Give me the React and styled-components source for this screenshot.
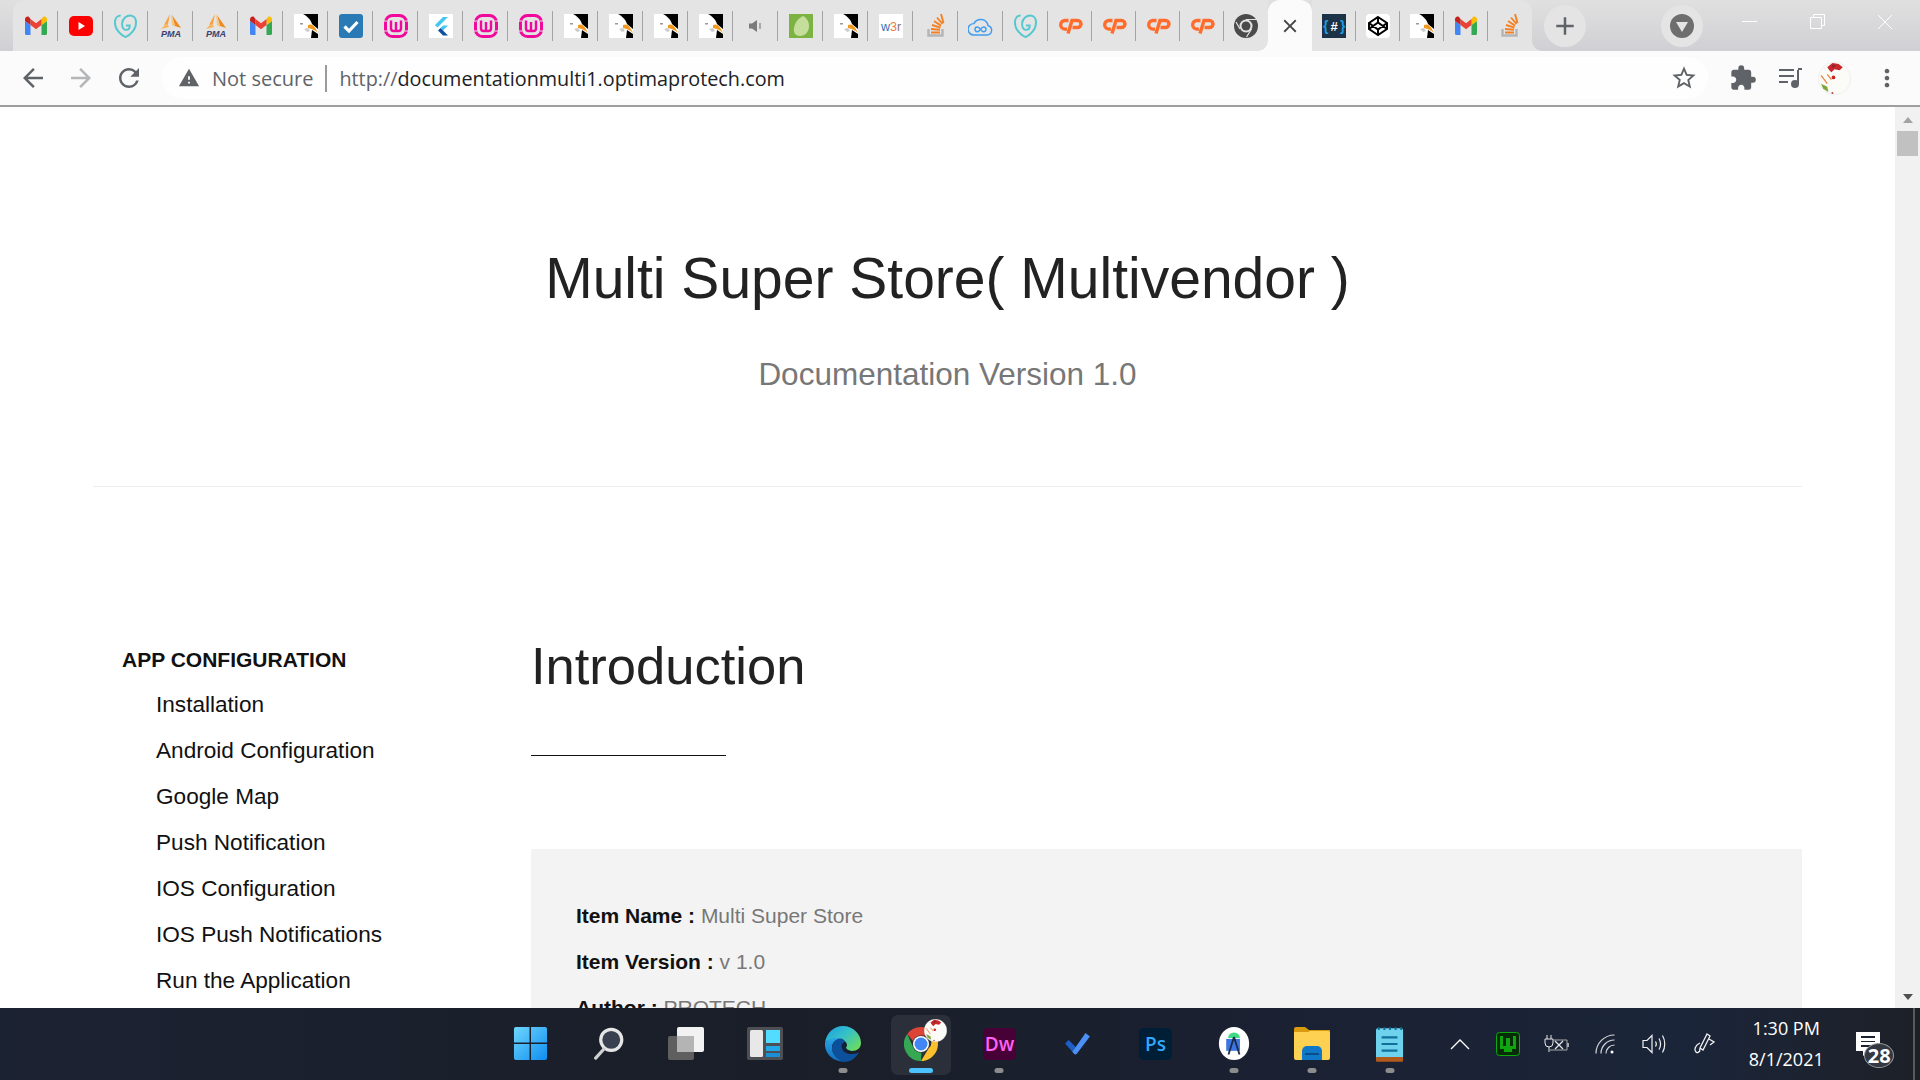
import React from 'react';
import styled, { createGlobalStyle } from 'styled-components';
import {
  MdArrowBack, MdArrowForward, MdRefresh, MdStarBorder, MdExtension, MdMoreVert, MdWarning, MdAdd, MdClose,
} from 'react-icons/md';

const GlobalStyle = createGlobalStyle`
  html, body { margin: 0; padding: 0; height: 100%; overflow: hidden; background: #fff; }
  * { box-sizing: border-box; }
  body { font-family: "Liberation Sans", Arial, sans-serif; }
`;

/* favicons in the tab strip */
const Gmail = () => (
  <svg width="24" height="19" viewBox="0 0 24 19">
    <path fill="#4285F4" d="M1 4v13.400A1.600 1.600 0 0 0 2.600 19H6.500V9L1 5z" />
    <path fill="#34A853" d="M17.500 19h3.900a1.600 1.600 0 0 0 1.600-1.600V5l-5.500 4z" />
    <path fill="#FBBC04" d="M17.500 3v6L23 5V3.500c0-2.300-2.300-3.800-4-2.500z" />
    <path fill="#EA4335" d="M6.500 9V3L12 7.200 17.500 3v6L12 13.200z" />
    <path fill="#C5221F" d="M1 3.500V5l5.500 4V3L5 1C3.300-.300 1 1.200 1 3.500z" />
  </svg>
);
const Youtube = () => (
  <svg width="24" height="24" viewBox="0 0 24 24">
    <rect x="0" y="2" width="24" height="20" rx="5" fill="#f00" />
    <path fill="#fff" d="M9.500 8l6.500 4-6.500 4z" />
  </svg>
);
const Swirl = () => (
  <svg width="23" height="24" viewBox="0 0 24 25" fill="none" stroke="#55c8cf" strokeWidth="2">
    <path d="M7 1.500C3 1.500 1 5 1 9c0 7 6 13 11 15 5-2 11-8 11-15 0-4-2-7.500-6-7.500-4 0-8 3-8.500 8-.4 3.500 1 7 4 7 2.500 0 4-2 4-4.500h-4" />
  </svg>
);
const Pma = () => (
  <svg width="24" height="24" viewBox="0 0 24 24">
    <path fill="#f6a13a" d="M11 0L5 11l4-1z" />
    <path fill="#fbc27a" d="M12 0l1 11 3 2z" />
    <path fill="#ee8a1e" d="M13 1l9 13-6-2z" />
    <path fill="#f8b45c" d="M8 9l-6 6 8-2z" />
    <text x="12" y="23" textAnchor="middle" fontFamily="Liberation Sans" fontSize="9" fontWeight="700" fontStyle="italic" fill="#3c3f6e">PMA</text>
  </svg>
);
const Gull = () => (
  <svg width="24" height="24" viewBox="0 0 24 24">
    <rect width="24" height="24" fill="#fff" />
    <path fill="#000" d="M9 0C13 2 17 6 18 10l6 5V0z" />
    <path fill="#000" d="M17 24l1-8 6 4v4z" />
    <path fill="#f29a1d" d="M14 11c4-2 7 1 10 8-3-3-6-4-10-5z" />
    <path fill="#999" d="M6 9h3v1.500H6z" />
    <path fill="#ccc" d="M10 15l4-1 2 3-3 1z" />
  </svg>
);
const BlueCheck = () => (
  <svg width="24" height="24" viewBox="0 0 24 24">
    <rect width="24" height="24" rx="3" fill="#2a7ab5" />
    <path d="M5.500 12.500l4.500 4.500 8.500-9" fill="none" stroke="#fff" strokeWidth="3.200" />
  </svg>
);
const Wamp = () => (
  <svg width="24" height="24" viewBox="0 0 24 24" fill="none" stroke="#f0099a">
    <rect x="1.500" y="1.500" width="21" height="21" rx="7" strokeWidth="3" />
    <path d="M7 6.500v8a2.500 2.500 0 0 0 2.500 2.500h5a2.500 2.500 0 0 0 2.500-2.500v-8M12 8v9" strokeWidth="2.400" />
    <path d="M0 7h3M21 7h3M0 17h3M21 17h3" stroke="#e4e4e4" strokeWidth="1" />
  </svg>
);
const Flutter = () => (
  <svg width="24" height="24" viewBox="0 0 24 24">
    <rect width="24" height="24" fill="#fff" />
    <path fill="#45c6f3" d="M14 3h5L8.500 13.500 6 11z" />
    <path fill="#45c6f3" d="M14 11.500h5L14 16.500 11.500 14z" />
    <path fill="#0f4f9e" d="M11.500 14L14 16.500l5 5h-5L9 16.500z" />
  </svg>
);
const Speaker = () => (
  <svg width="16" height="16" viewBox="0 0 16 16">
    <path fill="#7b7b7b" d="M1 5.500h3L9 2v12l-5-3.500H1z" />
    <rect x="11" y="5" width="2" height="6" fill="#a9a9a9" />
  </svg>
);
const Evernote = () => (
  <svg width="24" height="24" viewBox="0 0 24 24">
    <rect width="24" height="24" fill="#7cb342" />
    <path fill="#c5de9c" d="M14 2c4 2 6 6 6 10 0 6-4 10-9 10-4 0-7-3-6-8 1-6 5-10 9-12z" />
  </svg>
);
const W3r = () => (
  <svg width="24" height="24" viewBox="0 0 24 24">
    <rect width="24" height="24" fill="#fff" />
    <text x="12" y="17" textAnchor="middle" fontFamily="Liberation Sans" fontSize="12.500">
      <tspan fill="#3b6fb5">w</tspan><tspan fill="#f0783c">3</tspan><tspan fill="#777">r</tspan>
    </text>
  </svg>
);
const Stack = () => (
  <svg width="18" height="23" viewBox="0 0 18 23" fill="none">
    <path d="M1.500 15v6.500h14V15" stroke="#b5b5b5" strokeWidth="2.400" />
    <path d="M4 18.500h9M4 15l9 .8M5 11l8.500 2.600M7 7l7 4.600M10 3.500l5.500 6.500M14 0l2.500 9" stroke="#f48024" strokeWidth="1.900" />
  </svg>
);
const Cloud = () => (
  <svg width="25" height="20" viewBox="0 0 26 21" fill="none" stroke="#3f9cf0" strokeWidth="1.500">
    <path d="M6 20h14a5 5 0 0 0 1-9.800A8 8 0 0 0 6 8a6 6 0 0 0 0 12z" />
    <path d="M13 14c-1-1.500-2-2.500-3.300-2.500a2.500 2.500 0 0 0 0 5c1.300 0 2.300-1 3.300-2.500s2-2.500 3.300-2.500a2.500 2.500 0 0 1 0 5c-1.300 0-2.300-1-3.300-2.500z" />
  </svg>
);
const CPanel = () => (
  <svg width="25" height="17" viewBox="0 0 25 17" fill="none" stroke="#ff6c2c" strokeWidth="3.400">
    <path d="M10.500 3.500H7a4.300 4.300 0 0 0 0 8.600h2" />
    <path d="M10 16.500l4-13h5.500a3.200 3.200 0 0 1 0 7H14.500" />
  </svg>
);
const GrayChrome = () => (
  <svg width="24" height="24" viewBox="0 0 24 24">
    <circle cx="12" cy="12" r="12" fill="#4b4b4b" />
    <circle cx="12" cy="12" r="6.500" fill="#e4e4e4" />
    <circle cx="12" cy="12" r="4.500" fill="#4b4b4b" />
    <path d="M12 5.500h11M6 15l-4-7M17.500 15l-5 8" stroke="#e4e4e4" strokeWidth="1.200" />
  </svg>
);
const HashTag = () => (
  <svg width="24" height="24" viewBox="0 0 24 24">
    <rect width="24" height="24" fill="#1c3247" />
    <text x="12" y="17" textAnchor="middle" fontFamily="Liberation Sans" fontSize="13" fontWeight="700" fill="#fff">#</text>
    <text x="1" y="17" fontFamily="Liberation Sans" fontSize="14" fontWeight="700" fill="#1f9be0">{'{'}</text>
    <text x="18" y="17" fontFamily="Liberation Sans" fontSize="14" fontWeight="700" fill="#1f9be0">{'}'}</text>
  </svg>
);
const Codepen = () => (
  <svg width="24" height="24" viewBox="0 0 24 24">
    <rect width="24" height="24" rx="4" fill="#fff" />
    <path d="M12 3l9 6v6l-9 6-9-6V9zM12 3v5.500M12 21v-5.500M3 9l9 6.500L21 9M3 15l9-6.500 9 6.500" fill="none" stroke="#000" strokeWidth="2" />
  </svg>
);

const tabIcons = [
  Gmail, Youtube, Swirl, Pma, Pma, Gmail, Gull, BlueCheck, Wamp, Flutter, Wamp, Wamp, Gull, Gull, Gull, Gull,
  Speaker, Evernote, Gull, W3r, Stack, Cloud, Swirl, CPanel, CPanel, CPanel, CPanel, GrayChrome, null,
  HashTag, Codepen, Gull, Gmail, Stack,
];

const Screen = styled.div`
  width: 1920px;
  height: 1080px;
  display: flex;
  flex-direction: column;
  overflow: hidden;
`;

const TabStrip = styled.div`
  height: 51px;
  flex: none;
  display: flex;
  align-items: stretch;
  padding-left: 13px;
  background: linear-gradient(#e0e0e0, #d0d0d4);
`;

const Tab = styled.div`
  width: ${(p) => (p.$narrow ? 44 : 45)}px;
  flex: none;
  display: flex;
  align-items: center;
  justify-content: center;
  position: relative;
  background: ${(p) => (p.$active ? '#fbfbfb' : '#e4e4e4')};
  border-radius: ${(p) => (p.$first || p.$active ? '12px 12px 0 0' : '0')};
  border-top-right-radius: ${(p) => (p.$last || p.$active ? '12px' : '0')};
  color: #444;

  &::after {
    content: '';
    display: ${(p) => (p.$noSep ? 'none' : 'block')};
    position: absolute;
    right: 0;
    top: 11px;
    height: 30px;
    width: 1px;
    background: #a3a3a3;
  }
`;

const Flare = styled.div`
  position: absolute;
  bottom: 0;
  width: 10px;
  height: 10px;
  ${(p) => (p.$side === 'left' ? 'left: -10px;' : 'right: -10px;')}
  background: radial-gradient(
    circle 10px at ${(p) => (p.$side === 'left' ? '0 0' : '100% 0')},
    transparent 9.500px,
    ${(p) => p.$color} 10px
  );
`;

const NewTab = styled.div`
  width: 42px;
  height: 42px;
  margin: 5px 0 0 12px;
  flex: none;
  border-radius: 50%;
  background: #e4e4e4;
  color: #5f6368;
  display: flex;
  align-items: center;
  justify-content: center;
  font-size: 30px;
`;

const ProfileDot = styled.div`
  width: 42px;
  height: 42px;
  margin: 5px 0 0 75px;
  flex: none;
  border-radius: 50%;
  background: #e4e4e4;
  display: flex;
  align-items: center;
  justify-content: center;
`;

const WindowButtons = styled.div`
  margin-left: 12px;
  display: flex;
  align-items: center;
  height: 43px;
  color: #fff;
`;

const WindowButton = styled.div`
  width: 68px;
  display: flex;
  justify-content: center;
`;

const Toolbar = styled.div`
  height: 56px;
  flex: none;
  display: flex;
  align-items: center;
  padding-right: 12px;
  background: #fbfbfb;
  border-bottom: 2px solid #9e9e9e;
  color: #5f6368;
  font-family: "Open Sans", "Noto Sans", sans-serif;
`;

const NavButton = styled.div`
  width: 48px;
  display: flex;
  justify-content: center;
  font-size: 30px;
  color: ${(p) => (p.$dim ? '#b4b6b9' : '#5f6368')};
`;

const NavGroup = styled.div`
  display: flex;
  padding-left: 9px;
`;

const Omnibox = styled.div`
  flex: 1;
  height: 42px;
  margin-left: 9px;
  padding: 0 9px 0 16px;
  border-radius: 21px;
  background: #fefefe;
  display: flex;
  align-items: center;
`;

const SecurityChip = styled.div`
  display: flex;
  align-items: center;
  gap: 12px;
  font-size: 20px;
  color: #5f6368;
`;

const Divider = styled.div`
  width: 2px;
  height: 27px;
  background: #9a9a9a;
  margin: 0 12px 0 12px;
`;

const UrlText = styled.div`
  font-size: 19.800px;
  color: #202124;
  span { color: #5f6368; }
`;

const ToolIcon = styled.div`
  width: ${(p) => p.$w}px;
  flex: none;
  display: flex;
  justify-content: center;
  font-size: 28px;
  color: #5f6368;
`;

const StarSlot = styled(ToolIcon)`
  margin-left: auto;
`;

const Page = styled.div`
  flex: 1;
  min-height: 0;
  display: flex;
  overflow: hidden;
  background: #fff;
`;

const PageBody = styled.div`
  width: 1895px;
  flex: none;
  padding: 0 93px;
  color: #222;
`;

const Header = styled.header`
  height: 380px;
  border-bottom: 1px solid #eee;
  text-align: center;
  padding-top: 139px;
`;

const Title = styled.h1`
  margin: 0;
  font-size: 57px;
  line-height: 64px;
  font-weight: 400;
  color: #222;
`;

const Subtitle = styled.p`
  margin: 44px 0 0;
  font-size: 31.500px;
  line-height: 40px;
  color: #777;
`;

const Columns = styled.div`
  display: flex;
  padding-top: 150px;
`;

const Sidebar = styled.nav`
  width: 438px;
  flex: none;
  padding-left: 29px;
`;

const SideHeading = styled.div`
  font-size: 21px;
  line-height: 45px;
  font-weight: 700;
  color: #111;
`;

const SideList = styled.ul`
  list-style: none;
  margin: 0;
  padding: 0 0 0 34px;
`;

const SideItem = styled.li`
  font-size: 22.600px;
  line-height: 46px;
  color: #111;
`;

const Content = styled.main`
  flex: 1;
`;

const SectionTitle = styled.h2`
  margin: -3px 0 0;
  font-size: 52.500px;
  line-height: 64px;
  font-weight: 400;
  color: #222;
`;

const Rule = styled.div`
  width: 195px;
  height: 1px;
  background: #111;
  margin-top: 57px;
`;

const InfoBox = styled.div`
  margin-top: 93px;
  background: #f3f3f3;
  padding: 44px 45px;
  height: 400px;
`;

const InfoRow = styled.div`
  font-size: 21px;
  line-height: 46px;
  color: #777;
  b { color: #111; }
`;

const Scrollbar = styled.div`
  width: 25px;
  flex: none;
  background: #f1f1f1;
  display: flex;
  flex-direction: column;
  align-items: center;
`;

const ScrollThumb = styled.div`
  width: 21px;
  height: 25px;
  margin-top: 8px;
  background: #c1c1c1;
`;

const ScrollArrow = styled.div`
  width: 0;
  height: 0;
  border-left: 5px solid transparent;
  border-right: 5px solid transparent;
  ${(p) => (p.$down ? 'border-top: 6px solid #505050; margin-top: auto; margin-bottom: 8px;' : 'border-bottom: 6px solid #a3a3a3; margin-top: 10px;')}
`;

const Taskbar = styled.footer`
  height: 72px;
  flex: none;
  display: flex;
  align-items: stretch;
  padding-left: 491px;
  background: linear-gradient(90deg, #1b2232, #1a1e28 40%, #1a2030 62%, #1b2539 88%, #1d2027);
  color: #fff;
  font-family: "Open Sans", "Noto Sans", sans-serif;
  position: relative;

  &::after {
    content: '';
    position: absolute;
    right: 5px;
    top: 0;
    bottom: 0;
    width: 2px;
    background: #5a5a5a;
  }
`;

const TaskSlot = styled.div`
  width: 78.200px;
  flex: none;
  display: flex;
  align-items: center;
  justify-content: center;
  position: relative;
  padding-bottom: 1px;
`;

const ActiveBack = styled.div`
  position: absolute;
  left: 9px;
  right: 9px;
  top: 7px;
  bottom: 5px;
  border-radius: 7px;
  background: #2a2f3a;
`;

const RunDot = styled.div`
  position: absolute;
  left: 50%;
  bottom: 7px;
  height: 5px;
  border-radius: 3px;
  transform: translateX(-50%);
  width: ${(p) => (p.$active ? 24 : 9)}px;
  background: ${(p) => (p.$active ? '#4cc2ff' : '#8c8c8c')};
`;

const TaskIcon = styled.div`
  position: relative;
  display: flex;
`;

const ChromeBadge = styled.div`
  position: absolute;
  right: -9px;
  top: -8px;
  display: flex;
`;

const Tray = styled.div`
  padding-left: 7px;
  display: flex;
  align-items: center;
  padding-bottom: 1px;
`;

const TraySlot = styled.div`
  width: ${(p) => p.$w || 48}px;
  flex: none;
  display: flex;
  justify-content: center;
`;

const Clock = styled.div`
  width: 112px;
  flex: none;
  text-align: center;
  font-size: 18px;
  line-height: 31px;
  color: #fff;
`;

const Bubble = styled.div`
  position: relative;
  align-self: flex-start;
  width: 24px;
  height: 19px;
  margin: 24px 0 0 14px;
  background: #fff;
  display: flex;
  flex-direction: column;
  gap: 3px;
  padding: 4px 5px;

  &::after {
    content: '';
    position: absolute;
    left: 7px;
    top: 19px;
    border-top: 5px solid #fff;
    border-right: 6px solid transparent;
  }

  i {
    display: block;
    height: 2px;
    background: #1a2231;
  }
`;

const Badge = styled.div`
  position: absolute;
  left: 8px;
  top: 11px;
  width: 30px;
  height: 25px;
  border-radius: 50%;
  background: #333842;
  border: 1px solid #999;
  color: #fff;
  font-size: 20px;
  font-weight: 700;
  display: flex;
  align-items: center;
  justify-content: center;
  z-index: 1;
`;

const WinLogo = () => (
  <svg width="35" height="35" viewBox="0 0 36 36">
    <defs>
      <linearGradient id="win" x1="0" y1="0" x2="1" y2="1">
        <stop offset="0" stopColor="#6fd6fd" />
        <stop offset="1" stopColor="#0f8ef0" />
      </linearGradient>
    </defs>
    <path fill="url(#win)" d="M1 3a2 2 0 0 1 2-2h14v16H1zM18.500 1H33a2 2 0 0 1 2 2v14H18.500zM1 18.500h16V35H3a2 2 0 0 1-2-2zM18.500 18.500H35V33a2 2 0 0 1-2 2H18.500z" />
  </svg>
);
const SearchGlass = () => (
  <svg width="33" height="33" viewBox="0 0 36 36" fill="none">
    <circle cx="21" cy="14" r="11.500" fill="#394050" stroke="#e6e6e6" strokeWidth="3.500" />
    <path d="M13 24L4 34" stroke="#d0d0d0" strokeWidth="3.500" strokeLinecap="round" />
  </svg>
);
const TaskView = () => (
  <svg width="36" height="33" viewBox="0 0 36 33">
    <rect x="0" y="9" width="26" height="24" rx="2" fill="#5f5f5f" />
    <rect x="9" y="0" width="27" height="25" rx="2" fill="#f2f2f2" />
    <rect x="9" y="9" width="17" height="16" fill="#b4b4b4" />
  </svg>
);
const Widgets = () => (
  <svg width="36" height="33" viewBox="0 0 36 33">
    <rect width="36" height="33" rx="2" fill="#4d4f55" />
    <rect x="3" y="3" width="13" height="27" rx="1.500" fill="#e8e8e8" />
    <rect x="19" y="3" width="14" height="13" fill="#52dcff" />
    <rect x="19" y="19" width="14" height="5" fill="#21a7e6" />
    <rect x="19" y="26" width="14" height="4" fill="#1b8fd6" />
  </svg>
);
const Edge = () => (
  <svg width="36" height="36" viewBox="0 0 36 36">
    <defs>
      <linearGradient id="edgeA" x1="0" y1="0" x2="1" y2=".8">
        <stop offset="0" stopColor="#1b9de2" />
        <stop offset=".5" stopColor="#35c1c8" />
        <stop offset="1" stopColor="#6bdc5c" />
      </linearGradient>
      <linearGradient id="edgeB" x1="0" y1="0" x2="0" y2="1">
        <stop offset="0" stopColor="#2aa4e8" />
        <stop offset="1" stopColor="#0f6cbd" />
      </linearGradient>
    </defs>
    <path fill="url(#edgeA)" d="M0 17C1 7 9 0 18 0c10 0 18 8 18 17 0 5-4 8-9 8-3 0-6-1-6-3 0-1 1-1.500 1-3 0-3-4-6-9-6-6 0-11 1-13 4z" />
    <path fill="url(#edgeB)" d="M0 17c2-3 7-5 12-5 1 0 2 .200 3 .600-4 1-8 4-8 9 0 6 5 12 12 14C8 36-1 27 0 17z" />
    <path fill="#0c4f9a" d="M7 22c0-5 4-9 8-9.500 3 0 5 2 5 3.500-3 1-4 3-3 6 1 4 5 6 10 6 3 0 6-1 7-2-3 6-8 10-15 10C12 34 7 28 7 22z" />
    <path fill="#10233f" d="M17 21c.500-2 2-4 3-5 1 2 0 3 1 6 1 2 4 3 6 3-4 1-9 0-10-4z" />
  </svg>
);
const Chrome = () => (
  <svg width="34" height="34" viewBox="0 0 34 34">
    <path fill="#db4437" d="M17 0a17 17 0 0 1 14.700 8.500H17a8.500 8.500 0 0 0-8 5.500L3.200 7A17 17 0 0 1 17 0z" />
    <path fill="#fbc02d" d="M31.700 8.500A17 17 0 0 1 17 34l7.500-12.500a8.500 8.500 0 0 0 0-13z" />
    <path fill="#34a853" d="M17 34A17 17 0 0 1 3.200 7L9.500 21a8.500 8.500 0 0 0 8 4.500z" />
    <circle cx="17" cy="17" r="8" fill="#fff" />
    <circle cx="17" cy="17" r="6.500" fill="#4285f4" />
  </svg>
);
const Avatar = ({ size }) => (
  <svg width={size} height={size} viewBox="0 0 32 32">
    <circle cx="16" cy="16" r="15.700" fill="#fbfbf8" stroke="#e4e4e4" strokeWidth=".5" />
    <path fill="#c9252c" d="M9 5l5-4 6 1 4 3-3 3-5-1-3 3-2-2z" />
    <path fill="#7d2a2a" d="M13 3h4l-2 3z" />
    <circle cx="15" cy="15" r="1.800" fill="#c9252c" />
    <path stroke="#e9813f" strokeWidth="1.200" d="M3 13l6 8M9 12l4 5" />
    <path fill="#7fa63a" d="M3 21l6 3 1 5-5-3z" />
    <circle cx="14" cy="30" r="1" fill="#b5494c" />
  </svg>
);
const AdobeTile = ({ bg, color, children }) => (
  <svg width="33" height="32" viewBox="0 0 33 32">
    <rect width="33" height="32" rx="5" fill={bg} />
    <text x="16.500" y="23" textAnchor="middle" fontFamily="Open Sans" fontSize="19" fontWeight="600" fill={color}>{children}</text>
  </svg>
);
const TodoCheck = () => (
  <svg width="27" height="23" viewBox="0 0 30 26">
    <path fill="#1d5fc4" d="M1 13l4-4 8 8-4 5z" />
    <path fill="#4a90f5" d="M9 22l4-5L24 1l5 4-15 20c-2 1-3 0-5-3z" />
  </svg>
);
const AndroidStudio = () => (
  <svg width="32" height="33" viewBox="0 0 33 36">
    <ellipse cx="16.500" cy="18" rx="16.500" ry="18" fill="#fff" />
    <path fill="#3ddc84" d="M10 12a6.500 6 0 0 1 13 0z" />
    <rect x="8" y="13" width="15" height="13" fill="#3b76e1" />
    <path d="M16.500 11l-6 19M16.500 11l6 19" stroke="#1c2b4a" strokeWidth="2" fill="none" />
  </svg>
);
const Folder = () => (
  <svg width="36" height="33" viewBox="0 0 36 33">
    <path fill="#d99a0e" d="M0 2a2 2 0 0 1 2-2h9l4 3h21v26H0z" />
    <path fill="#ffd152" d="M0 5h14l2-1h18a2 2 0 0 1 2 2v25a2 2 0 0 1-2 2H2a2 2 0 0 1-2-2z" />
    <path fill="#0f78c9" d="M8 33v-9a5 5 0 0 1 5-5h10a5 5 0 0 1 5 5v9z" />
    <rect x="11" y="26" width="14" height="2" fill="#0a4f8a" />
  </svg>
);
const Notepad = () => (
  <svg width="28" height="36" viewBox="0 0 30 38">
    <rect y="2" width="29" height="33" rx="2" fill="#6fd2ec" />
    <rect y="33" width="29" height="5" rx="1" fill="#b3591a" />
    <path d="M3 1v3M9 1v3M15 1v3M21 1v3M27 1v3" stroke="#0e6f95" strokeWidth="2" />
    <path d="M6 12h17M6 19h17M6 26h17" stroke="#0f7199" strokeWidth="2.400" />
  </svg>
);
const Chevron = () => (
  <svg width="20" height="12" viewBox="0 0 20 12" fill="none" stroke="#fff" strokeWidth="1.300"><path d="M1 11l9-9 9 9" /></svg>
);
const WampTray = () => (
  <svg width="24" height="24" viewBox="0 0 24 24">
    <rect x=".5" y=".5" width="23" height="23" rx="3" fill="#052c05" stroke="#0fa80f" />
    <path d="M4 4v13h4v3h8v-3h4V4h-3v10h-3V6h-4v8H7V4z" fill="#11a511" />
  </svg>
);
const BatteryOff = () => (
  <svg width="25" height="17" viewBox="0 0 25 17" fill="none" stroke="#e8e8e8" strokeWidth="1">
    <path d="M3 0v4M7 0v4M1 4h8v4a4 4 0 0 1-8 0zM5 12v5" />
    <path d="M9 5h14v10H6" stroke="#a8a8a8" />
    <rect x="23" y="8" width="2" height="4" fill="#a8a8a8" stroke="none" />
    <path d="M11 6l8 8M19 6l-8 8" strokeWidth="1.200" />
  </svg>
);
const WifiTray = () => (
  <svg width="20" height="20" viewBox="0 0 20 20" fill="none" stroke="#d8d8d8" strokeWidth="1.200">
    <path d="M1 19.500A18.500 18.500 0 0 1 19.500 1M6 19.500A13.500 13.500 0 0 1 19.500 6M11 19.500A8.500 8.500 0 0 1 19.500 11" />
    <circle cx="17" cy="18" r="1.500" fill="#fff" stroke="none" />
  </svg>
);
const VolumeTray = () => (
  <svg width="24" height="20" viewBox="0 0 24 20" fill="none" stroke="#f0f0f0" strokeWidth="1.200">
    <path d="M1 6.500h4L10 1.500v17l-5-5H1zM13.500 7.500c1 1.500 1 3.500 0 5M17 4.500c2 3.500 2 7.500 0 11M20.500 1.500c3 5 3 12 0 17" />
  </svg>
);
const PenTray = () => (
  <svg width="21" height="21" viewBox="0 0 21 21" fill="none" stroke="#f0f0f0" strokeWidth="1.300">
    <path d="M13 1l3 2-7 14-3-2zM6 15l-.5 4M15 6l5 3-4 3" />
    <path d="M6 10c-5 2-6 7-4 9 1 1 3 1 3-1" />
  </svg>
);

const taskApps = [
  { icon: <WinLogo /> }, { icon: <SearchGlass /> }, { icon: <TaskView /> }, { icon: <Widgets /> },
  { icon: <Edge />, running: true },
  { icon: <Chrome />, running: true, active: true },
  { icon: <AdobeTile bg="#470137" color="#ff61f6">Dw</AdobeTile>, running: true },
  { icon: <TodoCheck /> },
  { icon: <AdobeTile bg="#001e36" color="#31a8ff">Ps</AdobeTile> },
  { icon: <AndroidStudio />, running: true },
  { icon: <Folder />, running: true },
  { icon: <Notepad />, running: true },
];

const navLinks = [
  'Installation', 'Android Configuration', 'Google Map', 'Push Notification',
  'IOS Configuration', 'IOS Push Notifications', 'Run the Application', 'Change App Name',
];

export default function App() {
  return (
    <Screen>
      <GlobalStyle />
      <TabStrip>
        {tabIcons.map((Icon, i) => (
          <Tab
            key={i}
            $narrow={i >= 23}
            $first={i === 0}
            $last={i === tabIcons.length - 1}
            $active={Icon === null}
            $noSep={Icon === null || i === 27 || i === tabIcons.length - 1}
          >
            {Icon ? <Icon /> : <MdClose size={22} />}
            {Icon === null && <Flare $side="left" $color="#fbfbfb" />}
            {Icon === null && <Flare $side="right" $color="#fbfbfb" />}
            {i === tabIcons.length - 1 && <Flare $side="right" $color="#e4e4e4" />}
          </Tab>
        ))}
        <NewTab><MdAdd /></NewTab>
        <ProfileDot>
          <svg width="26" height="26" viewBox="0 0 26 26">
            <circle cx="13" cy="13" r="12" fill="#6e6e6e" />
            <path d="M7 9h12l-6 10z" fill="#e4e4e4" />
          </svg>
        </ProfileDot>
        <WindowButtons>
          <WindowButton><svg width="15" height="2"><rect width="15" height="1" fill="#fff" /></svg></WindowButton>
          <WindowButton>
            <svg width="15" height="15" viewBox="0 0 15 15" fill="none" stroke="#fff"><path d="M3.500 3.500V.5h11v11h-3M.5 3.500h11v11H.5z" /></svg>
          </WindowButton>
          <WindowButton>
            <svg width="16" height="16" viewBox="0 0 16 16" stroke="#fff"><path d="M1 1l14 14M15 1L1 15" /></svg>
          </WindowButton>
        </WindowButtons>
      </TabStrip>

      <Toolbar>
        <NavGroup>
          <NavButton><MdArrowBack /></NavButton>
          <NavButton $dim><MdArrowForward /></NavButton>
          <NavButton><MdRefresh /></NavButton>
        </NavGroup>
        <Omnibox>
          <SecurityChip><MdWarning size={22} /> Not secure</SecurityChip>
          <Divider />
          <UrlText><span>http://</span>documentationmulti1.optimaprotech.com</UrlText>
          <StarSlot $w={30}><MdStarBorder /></StarSlot>
        </Omnibox>
        <ToolIcon $w={70}><MdExtension /></ToolIcon>
        <ToolIcon $w={24}>
          <svg width="24" height="22" viewBox="0 0 24 22" fill="none" stroke="#5f6368" strokeWidth="2">
            <path d="M1 3h15M1 9h15M1 15h9" />
            <path d="M20 3v14" /><path d="M20 2h4" />
            <circle cx="17" cy="17" r="3" fill="#5f6368" />
          </svg>
        </ToolIcon>
        <ToolIcon $w={64}><Avatar size={33} /></ToolIcon>
        <ToolIcon $w={42}><MdMoreVert /></ToolIcon>
      </Toolbar>

      <Page>
        <PageBody>
          <Header>
            <Title>Multi Super Store( Multivendor )</Title>
            <Subtitle>Documentation Version 1.0</Subtitle>
          </Header>
          <Columns>
            <Sidebar>
              <SideHeading>APP CONFIGURATION</SideHeading>
              <SideList>
                {navLinks.map((link) => <SideItem key={link}>{link}</SideItem>)}
              </SideList>
            </Sidebar>
            <Content>
              <SectionTitle>Introduction</SectionTitle>
              <Rule />
              <InfoBox>
                <InfoRow><b>Item Name :</b> Multi Super Store</InfoRow>
                <InfoRow><b>Item Version :</b> v 1.0</InfoRow>
                <InfoRow><b>Author :</b> PROTECH</InfoRow>
              </InfoBox>
            </Content>
          </Columns>
        </PageBody>
        <Scrollbar>
          <ScrollArrow />
          <ScrollThumb />
          <ScrollArrow $down />
        </Scrollbar>
      </Page>

      <Taskbar>
        {taskApps.map((app, i) => (
          <TaskSlot key={i}>
            {app.active && <ActiveBack />}
            <TaskIcon>
              {app.icon}
              {app.active && <ChromeBadge><Avatar size={23} /></ChromeBadge>}
            </TaskIcon>
            {app.running && <RunDot $active={app.active} />}
          </TaskSlot>
        ))}
        <Tray>
          <TraySlot><Chevron /></TraySlot>
          <TraySlot><WampTray /></TraySlot>
          <TraySlot><BatteryOff /></TraySlot>
          <TraySlot $w={50}><WifiTray /></TraySlot>
          <TraySlot $w={48}><VolumeTray /></TraySlot>
          <TraySlot $w={52}><PenTray /></TraySlot>
          <Clock>1:30 PM<br />8/1/2021</Clock>
          <Bubble>
            <i /><i /><i />
            <Badge>28</Badge>
          </Bubble>
        </Tray>
      </Taskbar>
    </Screen>
  );
}
